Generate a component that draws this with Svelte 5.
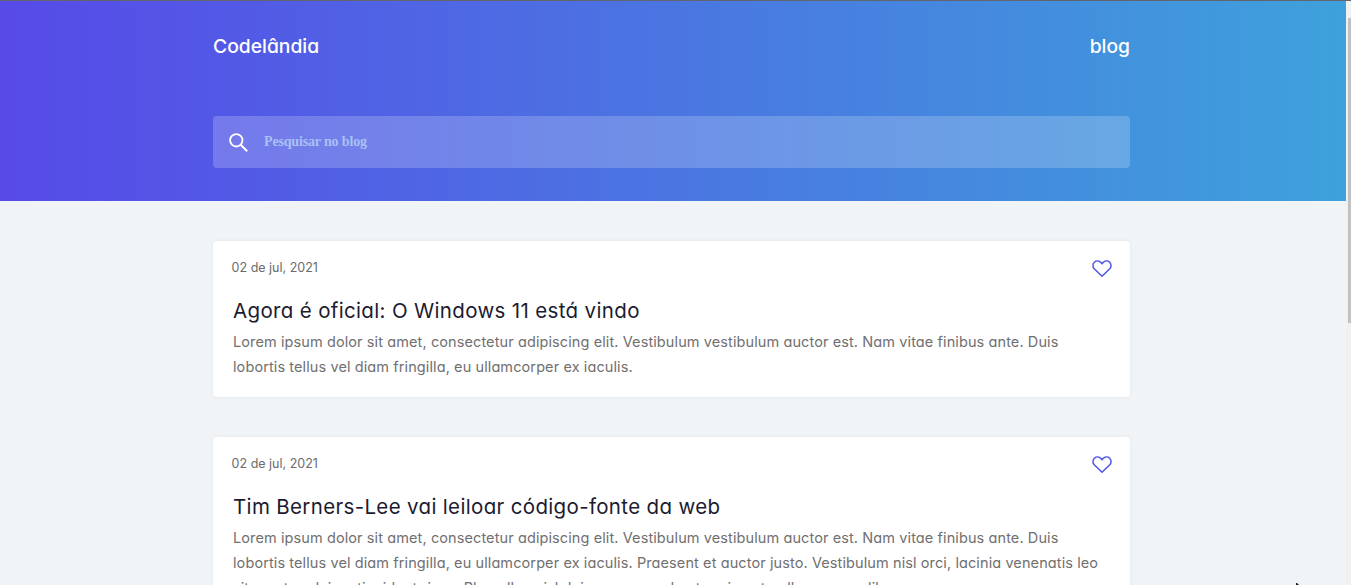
<script>
  const posts = [
    {
      date: '02 de jul, 2021',
      title: 'Agora é oficial: O Windows 11 está vindo',
      lines: [
        'Lorem ipsum dolor sit amet, consectetur adipiscing elit. Vestibulum vestibulum auctor est. Nam vitae finibus ante. Duis',
        'lobortis tellus vel diam fringilla, eu ullamcorper ex iaculis.'
      ]
    },
    {
      date: '02 de jul, 2021',
      title: 'Tim Berners-Lee vai leiloar código-fonte da web',
      lines: [
        'Lorem ipsum dolor sit amet, consectetur adipiscing elit. Vestibulum vestibulum auctor est. Nam vitae finibus ante. Duis',
        'lobortis tellus vel diam fringilla, eu ullamcorper ex iaculis. Praesent et auctor justo. Vestibulum nisl orci, lacinia venenatis leo',
        'sit amet, a dui ac tincidunt risus. Phasellus nisl dui, eu commodo et varius at nulla, congue libero.'
      ]
    }
  ];
</script>

<div class="window">
  <div class="page">
    <header>
      <div class="bar">
        <span class="brand">Codelândia</span>
        <span class="blog">blog</span>
      </div>
      <label class="search">
        <svg width="20" height="20" viewBox="0 0 20 20" fill="none" stroke="#fff">
          <circle cx="7.3" cy="7.3" r="6.2" stroke-width="1.8" />
          <path d="M11.7 11.7 18.2 18.2" stroke-width="2" />
        </svg>
        <span>Pesquisar no blog</span>
      </label>
    </header>
    <main>
      {#each posts as post}
        <article>
          <div class="meta">
            <span class="date">{post.date}</span>
            <svg width="20" height="18" viewBox="0 0 20 18" fill="none" stroke="#5054e6" stroke-width="1.5" stroke-linejoin="round">
              <path d="M10 16.3 2.2 8.8C.5 6.9.6 3.9 2.3 2.3 4.3.5 7.3.8 9 2.6L10 3.8l1-1.2C12.7.8 15.7.5 17.7 2.3c1.7 1.6 1.8 4.6.1 6.5Z" />
            </svg>
          </div>
          <h2>{post.title}</h2>
          <p>{#each post.lines as line}<span>{line}</span>{/each}</p>
        </article>
      {/each}
    </main>
  </div>
  <div class="scroll"><div class="thumb"></div></div>
  <svg class="cursor" width="3" height="3" viewBox="0 0 3 3"><path d="M0 0h1l2 2v1H0Z" fill="#1c1b30" /></svg>
</div>

<style>
  :global(body) { margin: 0; overflow: hidden; }
  .window {
    position: relative;
    box-sizing: border-box;
    display: flex;
    width: 1351px;
    height: 585px;
    overflow: hidden;
    border-top: 1px solid #62656b;
    background: #f0f4f7;
    font-family: Inter, sans-serif;
    font-feature-settings: 'cv11';
  }
  .page { width: 1346px; flex: none; }
  header {
    box-sizing: border-box;
    height: 200px;
    padding: 30px 216px 0 213px;
    background: linear-gradient(90deg, #574ae8, #3ea1db);
  }
  .bar {
    display: flex;
    justify-content: space-between;
    height: 85px;
    line-height: 30px;
    color: #fff;
    font-size: 19.3px;
    font-weight: 550;
  }
  .search {
    display: flex;
    align-items: center;
    gap: 15px;
    box-sizing: border-box;
    height: 52px;
    padding-left: 16px;
    border-radius: 4px;
    background: rgba(255, 255, 255, 0.2);
    color: #a9c1f5;
    font: bold 14px 'Liberation Serif', serif;
    letter-spacing: -0.16px;
  }
  .search svg { margin-top: 1px; }
  main {
    display: flex;
    flex-direction: column;
    gap: 40px;
    padding: 40px 216px 0 213px;
  }
  article {
    box-sizing: border-box;
    height: 156px;
    padding: 18px 18px 0 20px;
    border-radius: 4px;
    background: #fff;
    box-shadow: 0 0 4px rgba(0, 0, 0, 0.06);
  }
  .meta { display: flex; justify-content: space-between; height: 34px; }
  .meta svg { margin-top: 1px; }
  .date { margin-left: -1.4px; color: #6b6b6b; font-size: 12.5px; line-height: 17px; }
  h2 {
    margin: 0;
    color: #1c1b30;
    font-size: 20.5px;
    font-weight: 400;
    line-height: 36px;
    letter-spacing: 0.34px;
    white-space: nowrap;
  }
  p { margin: 0; color: #707070; font-size: 14.5px; line-height: 25px; letter-spacing: 0.1px; }
  p span { display: block; white-space: nowrap; }
  .scroll { flex: 1; padding: 17px 0 0 2px; background: #f1f1f1; }
  .thumb { height: 305px; background: #c1c1c1; }
  .cursor { position: absolute; left: 1296px; top: 582px; }
</style>
